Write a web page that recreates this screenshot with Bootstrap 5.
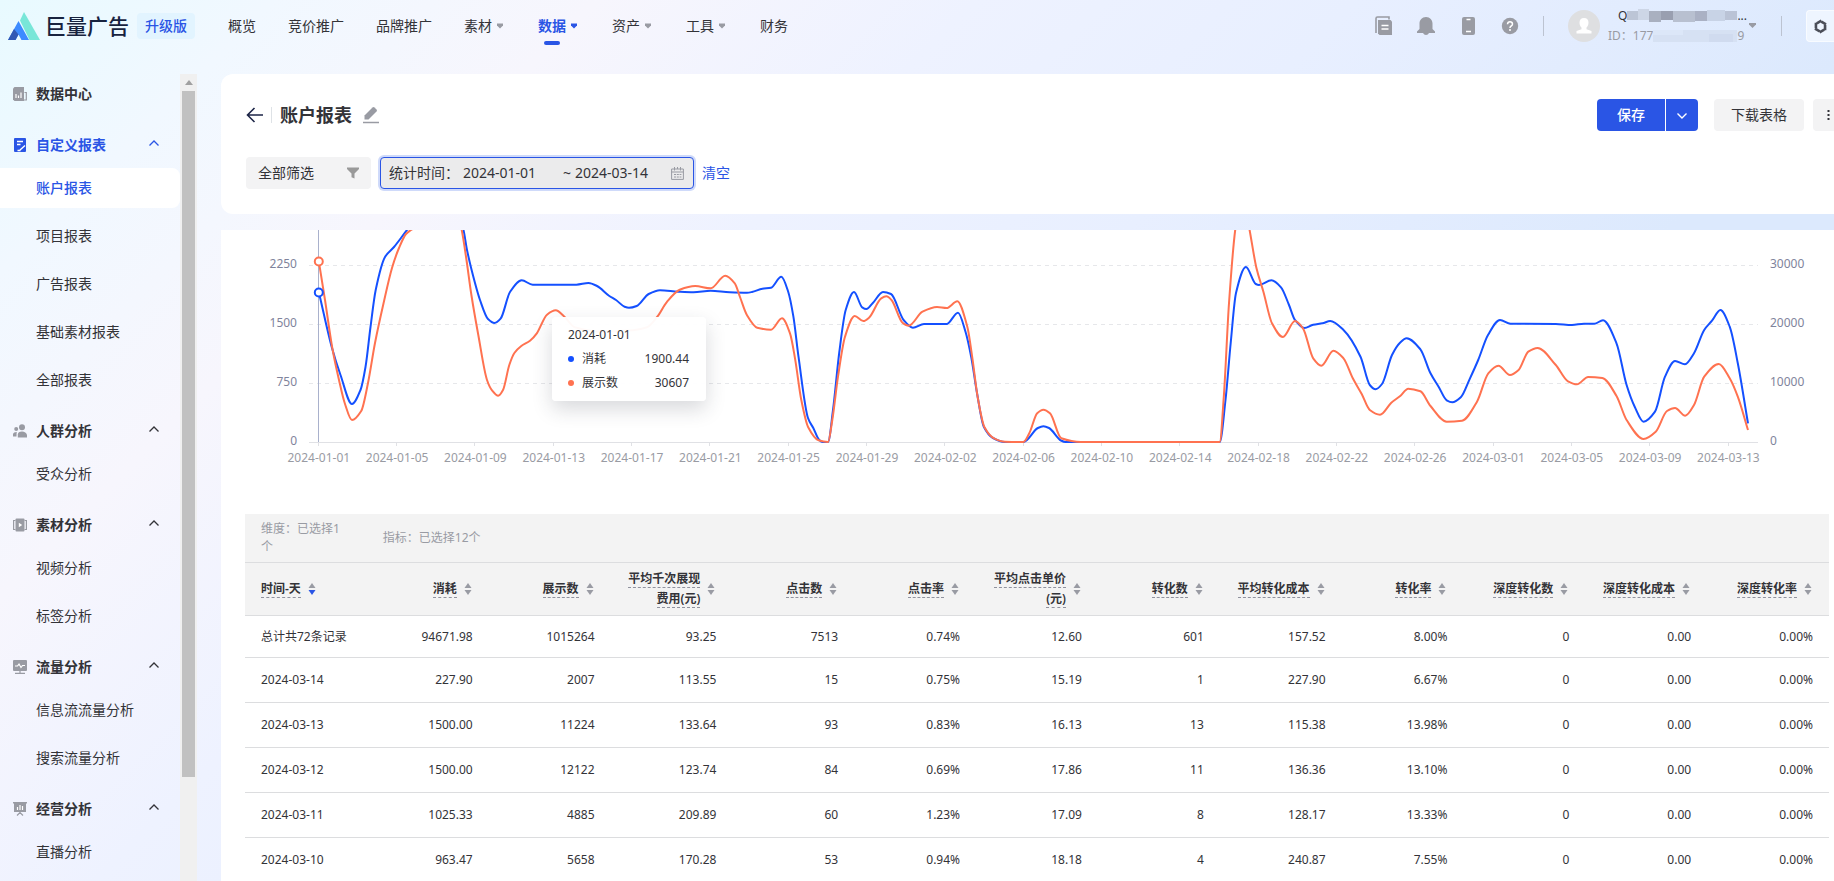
<!DOCTYPE html>
<html lang="zh-CN">
<head>
<meta charset="utf-8">
<meta name="viewport" content="width=device-width, initial-scale=1">
<title>账户报表 - 巨量广告</title>
<link href="https://cdn.jsdelivr.net/npm/bootstrap@5.3.0/dist/css/bootstrap.min.css" rel="stylesheet">
<style>
  :root { --brand: #2a55e5; --ink: #333338; --mute: #999ba3; --line: #dcdddf; }
  body {
    font-family: "Noto Sans", "Noto Sans CJK SC", sans-serif;
    font-size: 14px; line-height: 20px; color: var(--ink);
    background: linear-gradient(135deg, #e8faff 0%, #f1f8ff 10%, #f7f6fd 22%, #eef2ff 36%, #e8efff 50%, #dce9fd 70%, #dce9fd 100%);
  }
  a { color: inherit; text-decoration: none; }
  .topbar { height: 74px; flex: none; }
  .topbar-row { height: 52px; padding-left: 8px; }
  .brand-name { font-size: 21px; line-height: 28px; font-weight: 500; color: #18233f; margin-left: 5px; }
  .edition { background: #e2f4ff; color: var(--brand); padding: 3px 8px; border-radius: 4px; margin-left: 8px; font-weight: 500; }
  .top-menu { gap: 32px; margin-left: 33px; }
  .top-menu a { display: flex; align-items: center; height: 20px; }
  .top-menu svg { width: 14px; height: 8px; fill: #999ba3; }
  .top-menu .current { color: var(--brand); font-weight: 600; }
  .top-menu .current svg { fill: var(--brand); }
  .top-menu .current span { position: relative; }
  .top-menu .current span::after { content: ""; position: absolute; left: 6px; top: 25px; width: 16px; height: 4px; border-radius: 2px; background: var(--brand); }
  .tool-icons { gap: 24px; }
  .icon-btn { background: none; border: 0; padding: 0; display: flex; }
  .v-rule { width: 1px; height: 20px; background: #bcc3d1; }
  .account { font-size: 12px; line-height: 20px; width: 137px; color: var(--mute); white-space: nowrap; }
  .account svg { flex: none; }
  .account-name { color: var(--ink); padding-left: 10px; }
  .settings-box { width: 28px; height: 32px; background: #eef5ff; border: 1px solid #f8fbff; border-right: 0; border-radius: 4px 0 0 4px; display: flex; align-items: center; justify-content: center; }

  .side { width: 180px; flex: none; overflow: hidden; }
  .side-top, .side-group { display: flex; align-items: center; padding: 0 21px 0 13px; font-weight: 600; width: 100%; border: 0; background: none; color: var(--ink); text-align: left; }
  .side-top { height: 40px; margin-bottom: 8px; }
  .side-group { height: 46px; }
  .side-group.open { color: var(--brand); }
  .side-icon { width: 14px; height: 14px; margin-right: 9px; flex: none; }
  .side-group .chev { margin-left: auto; width: 10px; height: 10px; margin-bottom: 4px; }
  .side-link { display: flex; align-items: center; height: 40px; margin-bottom: 8px; padding-left: 36px; border-radius: 0 8px 8px 0; }
  .side-link.active { background: #fff; color: var(--brand); font-weight: 500; }
  .scroll-rail { width: 17px; flex: none; background: #f0f0f0; padding: 0 2px; }
  .scroll-up { height: 17px; display: flex; align-items: center; justify-content: center; }
  .scroll-thumb { height: 85%; background: #c1c1c1; }

  .body-row { min-height: 0; }
  .main-col { margin-left: 24px; overflow: hidden; }
  .head-card { background: #fff; border-radius: 12px 0 0 12px; padding: 25px 0 25px 25px; flex: none; }
  .title-rule { width: 1px; height: 16px; background: #dee2e6; }
  .page-title { font-size: 18px; line-height: 24px; font-weight: 700; margin: 0 10px 0 0; }
  .btn-row .btn { height: 32px; padding: 0; font-size: 14px; line-height: 20px; border: 0; border-radius: 4px; }
  .btn-row .btn-save { width: 68px; background: var(--brand); color: #fff; border-radius: 4px 0 0 4px; font-weight: 500; }
  .btn-row .btn-caret { width: 32px; background: var(--brand); border-radius: 0 4px 4px 0; margin-left: 1px; }
  .btn-row .btn-grey { background: #f3f3f4; color: var(--ink); }
  .btn-row .btn-load { width: 90px; margin-left: 16px; }
  .btn-row .btn-more { width: 21px; margin-left: 9px; border-radius: 4px 0 0 4px; text-align: right; padding-right: 4px; }
  .filter-row { margin-top: 26px; }
  .filter-btn { width: 125px; height: 32px; background: #f3f3f4; border: 0; border-radius: 4px; padding: 0 12px; color: var(--ink); }
  .date-box { width: 314px; height: 32px; background: #ebebec; border: 1px solid var(--brand); border-radius: 4px; box-shadow: 0 0 0 2px #cfdafa; margin-left: 9px; padding: 0 9px 0 8px; }
  .date-box input { width: 88px; border: 0; padding: 0; background: none; color: var(--ink); font-size: 14px; line-height: 20px; outline: 0; }
  .clear-link { color: var(--brand); margin-left: 8px; }

  .report { background: #fff; margin-top: 16px; overflow: hidden; }
  .chart-grid { display: grid; grid-template-columns: 88px minmax(0, 1fr) 76px; position: relative; }
  .axis { padding-top: 4px; font-size: 12px; color: #7f849c; height: 240px; }
  .axis div { height: 59px; display: flex; align-items: center; padding: 0 12px; }
  .axis-left div { justify-content: flex-end; }
  .plot { display: block; width: 100%; height: 217px; }
  .days { display: flex; margin-left: calc(-100% * 3 / 148); font-size: 12px; line-height: 18px; color: var(--mute); padding-top: 2px; white-space: nowrap; }
  .days span { flex: none; display: flex; justify-content: center; }
  .tip { position: absolute; left: 331px; top: 87px; width: 154px; padding: 6px 17px 6px 16px; font-size: 12px; line-height: 24px; background: rgba(255,255,255,.96); border-radius: 4px; box-shadow: 0 8px 20px rgba(40,45,60,.18); }
  .tip i { width: 6px; height: 6px; border-radius: 50%; margin-right: 8px; }
  .dot-cost { background: #1450ff; }
  .dot-show { background: #ff7250; }

  .table-area { margin: 44px 5px 0 24px; }
  .report-table { width: 100%; table-layout: fixed; border-collapse: separate; border-spacing: 0; font-size: 12px; line-height: 18px; }
  .report-table th, .report-table td { border-bottom: 1px solid var(--line); padding: 0 16px; text-align: right; font-weight: 400; height: 45px; }
  .report-table th:first-child, .report-table td:first-child { text-align: left; }
  .report-table thead { background: #f3f3f3; }
  .report-table .picked th { height: 49px; color: var(--mute); text-align: left; }
  .report-table .heads th { height: 53px; font-weight: 600; line-height: 20px; }
  .report-table .sum td { height: 42px; }
  .sort-head { display: inline-flex; align-items: center; gap: 6px; vertical-align: middle; border: 0; background: none; padding: 0; font-weight: 600; color: var(--ink); text-align: right; line-height: 20px; }
  .sort-head span > span { border-bottom: 1px dashed #90929e; }
  .sort-head svg { width: 10px; height: 12px; fill: #999ba3; flex: none; }
  .sort-head .on { fill: var(--brand); }
</style>
</head>
<body class="vh-100 overflow-hidden d-flex flex-column">

<header class="topbar">
  <div class="topbar-row d-flex align-items-center">
    <a href="#" class="d-flex align-items-center">
      <svg width="32" height="28" viewBox="0 0 32 28"><path d="M16 0 32 28H21.500L12 8.500z" fill="#78e6d8"/><path d="M10.500 9 21 28H13.500L10.500 22.500 7.500 28H0z" fill="#3d8bff"/><path d="M0 28 6 17 10.500 22.500 7.500 28z" fill="#3158b4"/></svg>
      <span class="brand-name">巨量广告</span>
    </a>
    <span class="edition">升级版</span>
    <nav class="top-menu d-flex">
      <a href="#">概览</a>
      <a href="#">竞价推广</a>
      <a href="#">品牌推广</a>
      <a href="#"><span>素材</span><svg viewBox="0 0 14 8"><path d="M5 1.500h6v2L8 6.500 5 3.500z"/></svg></a>
      <a href="#" class="current"><span>数据</span><svg viewBox="0 0 14 8"><path d="M5 1.500h6v2L8 6.500 5 3.500z"/></svg></a>
      <a href="#"><span>资产</span><svg viewBox="0 0 14 8"><path d="M5 1.500h6v2L8 6.500 5 3.500z"/></svg></a>
      <a href="#"><span>工具</span><svg viewBox="0 0 14 8"><path d="M5 1.500h6v2L8 6.500 5 3.500z"/></svg></a>
      <a href="#">财务</a>
    </nav>
    <div class="tool-icons d-flex align-items-center ms-auto">
      <button class="icon-btn" aria-label="文档"><svg width="18" height="20" viewBox="0 0 18 20"><path d="M1 17V2.500Q1 1 2.500 1H14v2.500" fill="none" stroke="#999ba3" stroke-width="1.600"/><path d="M3 4h12.500L17 5.500V19H4.500L3 17.500z" fill="#999ba3"/><path d="M6.500 9.500h7M6.500 13h7" stroke="#fff" stroke-width="1.400"/></svg></button>
      <button class="icon-btn" aria-label="通知"><svg width="18" height="20" viewBox="0 0 18 20"><path d="M9 1c4 0 6.500 3 6.500 6.500V13l2.500 2.500V17H0v-1.500L2.500 13V7.500C2.500 4 5 1 9 1z" fill="#999ba3"/><path d="M6 17h6q-1 2-3 2t-3-2z" fill="#999ba3"/></svg></button>
      <button class="icon-btn" aria-label="手机"><svg width="18" height="20" viewBox="0 0 18 20"><rect x="3" y="1" width="13" height="18" rx="2" fill="#999ba3"/><path d="M7.500 3.500h4M7 15.500h5" stroke="#fff" stroke-width="1.500"/></svg></button>
      <button class="icon-btn" aria-label="帮助"><svg width="18" height="20" viewBox="0 0 18 20"><circle cx="9" cy="10" r="8.200" fill="#999ba3"/><path d="M6.500 8.200Q6.700 5.800 9 5.800T11.500 8Q11.500 9.300 10.200 10T9 12" fill="none" stroke="#fff" stroke-width="1.500"/><circle cx="9" cy="14" r="1" fill="#fff"/></svg></button>
      <span class="v-rule"></span>
      <svg width="32" height="32" viewBox="0 0 32 32"><circle cx="16" cy="16" r="16" fill="#dedfe1"/><path d="M16 8c3 0 4.500 2 4.500 4.800 0 2-.9 3.800-2 4.800v1.600l5 1.800v2.500h-15V21l5-1.800v-1.600c-1.100-1-2-2.800-2-4.800C11.500 10 13 8 16 8z" fill="#fff"/></svg>
    </div>
    <div class="account ms-2">
      <div class="account-name d-flex align-items-center">Q<svg width="110" height="14" viewBox="0 0 110 14"><path d="M0 2h11v9H0z" fill="#bcc5d6"/><path d="M11 0h11v11H11z" fill="#cdd6e6"/><path d="M22 2h12v11H22z" fill="#a9b0c0"/><path d="M34 2h12v9H34z" fill="#999fb0"/><path d="M46 2h22v11H46z" fill="#b8c0d0"/><path d="M68 2h12v10H68z" fill="#aab1c4"/><path d="M80 1h18v11H80z" fill="#c8d3e6"/><path d="M98 2h12v9H98z" fill="#bac3d6"/></svg>...</div>
      <div class="d-flex align-items-center">ID：177<svg width="84" height="12" viewBox="0 0 84 12"><path d="M0 0h84v12H0z" fill="#d6e1f3"/><path d="M0 0h30v5H0z" fill="#dce7f8"/><path d="M56 4h24v8H56z" fill="#d0dbef"/></svg>9</div>
    </div>
    <svg width="8" height="6" viewBox="0 0 8 6" class="ms-1"><path d="M0 0h7v1.500L3.500 5 0 1.500z" fill="#999ba3"/></svg>
    <span class="v-rule mx-4"></span>
    <button class="settings-box p-0" aria-label="设置"><svg width="17" height="17" viewBox="0 0 17 17"><defs><path id="blade" d="M9.300 3.700 14 6.400" fill="none" stroke="#4b4e58" stroke-width="2.600"/></defs><use href="#blade"/><use href="#blade" transform="rotate(60 8.500 8.500)"/><use href="#blade" transform="rotate(120 8.500 8.500)"/><use href="#blade" transform="rotate(180 8.500 8.500)"/><use href="#blade" transform="rotate(240 8.500 8.500)"/><use href="#blade" transform="rotate(300 8.500 8.500)"/></svg></button>
  </div>
</header>

<div class="body-row d-flex flex-grow-1">
  <nav class="side">
    <a href="#" class="side-top"><svg class="side-icon" viewBox="0 0 14 14"><path d="M1.500 0H11v14H1.500L0 12.500v-11z" fill="#999ba3"/><path d="M11.500 5.500H13.300V13H11" fill="none" stroke="#999ba3" stroke-width="1.200"/><path d="M3 11V7M5.500 11V8.500M8 11V5.500" stroke="#fff" stroke-width="1.200"/></svg>数据中心</a>

    <button class="side-group open"><svg class="side-icon" viewBox="0 0 14 14"><rect x="1" y="0" width="12" height="14" rx="1" fill="#2a55e5"/><path d="M4 3.500h6M4 6.500h3.500M7 12l5-4.500M4.500 12.500h3" stroke="#fff" stroke-width="1.400"/></svg>自定义报表<svg class="chev" viewBox="0 0 10 10"><path d="M.5 7.500 5 3l4.500 4.500" fill="none" stroke="currentColor" stroke-width="1.300"/></svg></button>
    <a href="#" class="side-link active">账户报表</a>
    <a href="#" class="side-link">项目报表</a>
    <a href="#" class="side-link">广告报表</a>
    <a href="#" class="side-link">基础素材报表</a>
    <a href="#" class="side-link">全部报表</a>

    <button class="side-group"><svg class="side-icon" viewBox="0 0 14 14" fill="#999ba3"><circle cx="9" cy="3.200" r="3"/><path d="M4.800 13.500v-3Q5 7.500 9 7.500t5 3.500v2.500z"/><circle cx="3.200" cy="5" r="2"/><path d="M0 12.500V10q.5-2 3.800-2Q3.500 9.500 3.500 12.500z"/></svg>人群分析<svg class="chev" viewBox="0 0 10 10"><path d="M.5 7.500 5 3l4.500 4.500" fill="none" stroke="currentColor" stroke-width="1.300"/></svg></button>
    <a href="#" class="side-link">受众分析</a>

    <button class="side-group"><svg class="side-icon" viewBox="0 0 14 14"><rect x="2.500" y="0.500" width="9" height="13" rx="1" fill="#999ba3"/><path d="M2.500 2.500H.6v9h1.900M11.500 2.500h1.900v9h-1.900" fill="none" stroke="#999ba3" stroke-width="1.200"/><path d="M5.800 4.800 9.200 7 5.800 9.200z" fill="#fff"/></svg>素材分析<svg class="chev" viewBox="0 0 10 10"><path d="M.5 7.500 5 3l4.500 4.500" fill="none" stroke="currentColor" stroke-width="1.300"/></svg></button>
    <a href="#" class="side-link">视频分析</a>
    <a href="#" class="side-link">标签分析</a>

    <button class="side-group"><svg class="side-icon" viewBox="0 0 14 14"><rect width="14" height="11" rx="1" fill="#999ba3"/><path d="M7 11v2M2 13.400h10" stroke="#999ba3" stroke-width="1.200"/><path d="M2 6h2.500L6 4l2 3.500L9.500 5.500H12" fill="none" stroke="#fff" stroke-width="1.200"/></svg>流量分析<svg class="chev" viewBox="0 0 10 10"><path d="M.5 7.500 5 3l4.500 4.500" fill="none" stroke="currentColor" stroke-width="1.300"/></svg></button>
    <a href="#" class="side-link">信息流流量分析</a>
    <a href="#" class="side-link">搜索流量分析</a>

    <button class="side-group"><svg class="side-icon" viewBox="0 0 14 14"><path d="M0 0h14v1.500h-1V10H1V1.500H0z" fill="#999ba3"/><path d="M7 10v2M4 13.500 7 10.500l3 3" fill="none" stroke="#999ba3" stroke-width="1.200"/><path d="M4.500 8V5M7 8V3M9.500 8V4" stroke="#fff" stroke-width="1.200"/></svg>经营分析<svg class="chev" viewBox="0 0 10 10"><path d="M.5 7.500 5 3l4.500 4.500" fill="none" stroke="currentColor" stroke-width="1.300"/></svg></button>
    <a href="#" class="side-link">直播分析</a>
  </nav>
  <div class="scroll-rail" aria-hidden="true">
    <div class="scroll-up"><svg width="8" height="5" viewBox="0 0 8 5"><path d="M4 0 8 5H0z" fill="#a0a0a0"/></svg></div>
    <div class="scroll-thumb"></div>
  </div>

  <main class="main-col flex-grow-1 d-flex flex-column">
    <section class="head-card">
      <div class="btn-row d-flex align-items-center">
        <button class="icon-btn" aria-label="返回"><svg width="17" height="16" viewBox="0 0 17 16"><path d="M8.500 1 1.500 8l7 7M1.500 8H17" fill="none" stroke="#1d2547" stroke-width="1.600"/></svg></button>
        <span class="title-rule mx-2"></span>
        <h1 class="page-title">账户报表</h1>
        <button class="icon-btn" aria-label="编辑"><svg width="18" height="18" viewBox="0 0 18 18"><path d="M2.500 13.500V9.500L10.500 1.500q1-1 2 0l2 2q1 1 0 2L6.500 13.500z" fill="#999ba3"/><path d="M1 16.500h16" stroke="#999ba3" stroke-width="1.500"/></svg></button>
        <button class="btn btn-save ms-auto">保存</button>
        <button class="btn btn-caret" aria-label="更多保存方式"><svg width="10" height="10" viewBox="0 0 10 10"><path d="M.5 2.500 5 7l4.500-4.500" fill="none" stroke="#fff" stroke-width="1.400"/></svg></button>
        <button class="btn btn-grey btn-load">下载表格</button>
        <button class="btn btn-grey btn-more" aria-label="更多"><svg width="3" height="12" viewBox="0 0 3 12" class="d-block ms-auto"><path d="M.5 1h2v2h-2zM.5 5h2v2h-2zM.5 9h2v2h-2z" fill="#333338"/></svg></button>
      </div>
      <div class="filter-row d-flex align-items-center">
        <button class="filter-btn d-flex align-items-center justify-content-between">全部筛选<svg width="12" height="12" viewBox="0 0 12 12"><path d="M0 .5h12v1.500L7.500 6.500v5l-3-1.200V6.500L0 2z" fill="#999"/></svg></button>
        <div class="date-box d-flex align-items-center">
          <label for="from" class="me-1">统计时间：</label>
          <input id="from" value="2024-01-01">
          <label for="to" class="px-1 ms-2">~</label>
          <input id="to" value="2024-03-14">
          <svg width="13" height="13" viewBox="0 0 13 13" class="ms-auto"><path d="M.6 2h11.800v10.400H.6zM.6 5h11.800M3.500 0v3.500M9.500 0v3.500M6.500 0v2" fill="none" stroke="#999ba3"/><path d="M3 7.500h2M5.800 7.500h2M8.600 7.500h1.800M3 10h2M5.800 10h2M8.600 10h1.800" stroke="#999ba3" stroke-width="1.200"/></svg>
        </div>
        <a href="#" class="clear-link">清空</a>
      </div>
    </section>

    <section class="report flex-grow-1">
      <div class="chart-grid">
        <div class="axis axis-left"><div>2250</div><div>1500</div><div>750</div><div>0</div></div>
        <div>
          <svg class="plot" id="plot" role="img" aria-label="消耗与展示数趋势"></svg>
          <div class="days" id="days"></div>
        </div>
        <div class="axis"><div>30000</div><div>20000</div><div>10000</div><div>0</div></div>
        <div class="tip">
          <div>2024-01-01</div>
          <div class="d-flex align-items-center"><i class="dot-cost"></i>消耗<span class="ms-auto">1900.44</span></div>
          <div class="d-flex align-items-center"><i class="dot-show"></i>展示数<span class="ms-auto">30607</span></div>
        </div>
      </div>

      <div class="table-area">
        <table class="report-table">
          <thead>
            <tr class="picked"><th>维度：已选择1个</th><th colspan="12">指标：已选择12个</th></tr>
            <tr class="heads" id="heads"></tr>
          </thead>
          <tbody>
            <tr class="sum"><td>总计共72条记录</td><td>94671.98</td><td>1015264</td><td>93.25</td><td>7513</td><td>0.74%</td><td>12.60</td><td>601</td><td>157.52</td><td>8.00%</td><td>0</td><td>0.00</td><td>0.00%</td></tr>
            <tr><td>2024-03-14</td><td>227.90</td><td>2007</td><td>113.55</td><td>15</td><td>0.75%</td><td>15.19</td><td>1</td><td>227.90</td><td>6.67%</td><td>0</td><td>0.00</td><td>0.00%</td></tr>
            <tr><td>2024-03-13</td><td>1500.00</td><td>11224</td><td>133.64</td><td>93</td><td>0.83%</td><td>16.13</td><td>13</td><td>115.38</td><td>13.98%</td><td>0</td><td>0.00</td><td>0.00%</td></tr>
            <tr><td>2024-03-12</td><td>1500.00</td><td>12122</td><td>123.74</td><td>84</td><td>0.69%</td><td>17.86</td><td>11</td><td>136.36</td><td>13.10%</td><td>0</td><td>0.00</td><td>0.00%</td></tr>
            <tr><td>2024-03-11</td><td>1025.33</td><td>4885</td><td>209.89</td><td>60</td><td>1.23%</td><td>17.09</td><td>8</td><td>128.17</td><td>13.33%</td><td>0</td><td>0.00</td><td>0.00%</td></tr>
            <tr><td>2024-03-10</td><td>963.47</td><td>5658</td><td>170.28</td><td>53</td><td>0.94%</td><td>18.18</td><td>4</td><td>240.87</td><td>7.55%</td><td>0</td><td>0.00</td><td>0.00%</td></tr>
          </tbody>
        </table>
      </div>
    </section>
  </main>
</div>

<script src="https://cdn.jsdelivr.net/npm/bootstrap@5.3.0/dist/js/bootstrap.bundle.min.js"></script>
<script>
  // Table headings with their sort arrows; the first column is sorted descending.
  const heads = ['时间-天', '消耗', '展示数', '平均千次展现费用(元)', '点击数', '点击率', '平均点击单价(元)', '转化数', '平均转化成本', '转化率', '深度转化数', '深度转化成本', '深度转化率'];
  document.getElementById('heads').innerHTML = heads.map((h, i) =>
    `<th><button class="sort-head"><span><span>${h}</span></span><svg viewBox="0 0 10 12"><path d="M5 0 8.500 5h-7z"/><path class="${i ? '' : 'on'}" d="M1.500 7h7L5 12z"/></svg></button></th>`).join('');

  // Every fourth day gets a label and a tick.
  const DAYS = 74, BASE = 1449;
  const labels = [];
  for (let d = 0; d < DAYS; d += 4) labels.push(new Date(Date.UTC(2024, 0, 1 + d)).toISOString().slice(0, 10));

  // Curve samples: x on a 1449-wide base, y down from the top of the visible area.
  const cost = '9.8,62 23,118 31.5,145 43,174 51.5,160 56.5,137 61.5,97 66.7,60 76,27 85,17 98,0 106,-10 125,-40 145,-30 154.5,0 158,20 166,53 171,70 179,89 185.5,93 191.6,88.7 201,62 212.7,50.3 223.7,54.7 267.4,54.7 279.5,53 288,56 300,65.7 307,70 315.6,76.7 320,77.8 327.7,76 339.7,64 351,60.3 369,61.7 384.5,62.3 401.7,60.7 420.6,62.3 438,62.7 443,62 453.4,58.7 462,57.7 472.3,46.7 479.2,61.7 484.4,86.7 489.5,126.7 499,188 504.3,198 510.2,210 513.6,212 519,212 524,180 530.2,123 536.7,80 545,62 553.2,77.3 557.4,79 563.6,73.3 574,62 582,64 594.6,90 603.9,97.7 615,94 637.6,94 649,82.7 656.5,101.7 662.4,128 668,163 674.8,196.7 684,208 695.5,212 714.4,212 728.9,198 734.4,196.3 740,198 752,210.5 756.4,212 910.7,212 916.5,170 921.7,113 927,63 936.9,37 946.8,54 950,55 962.5,50.3 972,57.3 980,75 986,90 995.3,98 1004.2,94.7 1013.5,93.3 1021.2,91 1034.5,100 1051.5,126.7 1060.8,155 1066.5,159.3 1073,154 1083,125 1091,112.7 1097.6,108.3 1111.4,119.3 1121.5,143.3 1129.6,156.7 1137.7,170.3 1143.3,172.3 1151.8,167.3 1161,148.3 1169.2,130 1179,105 1191,90 1201.5,93.7 1214.5,93.7 1246.8,94 1263,95 1275,93.7 1285.3,93.7 1294,90.3 1307.5,113.3 1317.6,155 1325.7,176.7 1334.6,191.7 1346,181.7 1356,146.7 1366,131 1376,134.3 1385,123.3 1395.2,100 1403,90.7 1411.4,80 1420.7,96.7 1428.8,133.3 1439,193.3';
  const shows = '9.8,31.3 16,70 23.3,118 30,150 35.7,173 43,190 52.2,181 59,153 66,113 74.6,73 83,38 90,18 97,4 102,0 115,-8 135,-30 147,-20 152.7,0 157.2,28 162.4,65 169.3,105 178,150 183,160.3 189.2,165.7 194,160 200.3,135 205.4,123 212.3,116 221,110.7 227.8,103.3 238,84.7 246.7,80.3 255.4,86.7 265.7,97.3 290,101.5 324,100.3 338,97.3 348.3,86.7 357.6,72.3 370.7,59.7 386.2,56 401.7,58.3 416.2,45.7 425.8,53.3 431,67 437.9,85 448.2,97.7 462,99.7 473,88.3 481,103.3 486,128.3 492.3,170 499.2,197.3 509.5,210.3 519,212 523.3,190 529,146.7 536,106.7 545.7,86 554.3,91 560,87.7 572.2,68.3 577.4,66.3 582.5,70 593.5,92.7 599.7,95.7 613.5,81.7 628,77 637.6,78 648.3,71.3 658.3,96.7 663.4,128.3 668.6,166.7 675.5,197.3 685,208.3 696,211.7 714.4,212 720.3,203.3 728.2,183.3 734.4,179.7 741,183.3 752.3,208.3 772,212 910.7,212 914.8,166.7 920,73.3 926.2,0 933,-40 940.6,0 947.5,38.3 954.4,61.7 963,93.3 973.9,107 986,91 994,98.3 1004.2,128.3 1012.3,135.7 1024.4,120.7 1034.5,128.3 1043.8,148.3 1052.7,164 1060.8,180 1071,184.7 1082.3,172.7 1091.2,166 1099.2,158.7 1111.4,161.3 1121.5,176 1137.7,191.7 1153,190.7 1168,171.7 1179.3,143.3 1189.4,135.7 1201,145 1209.6,140 1219.3,121.7 1228.6,118 1246.8,135 1259,151.3 1267.9,154.3 1279.2,147 1293.3,148 1307.5,166 1317.6,190 1334.6,209 1346.7,201.7 1358,181 1366,178 1376.2,185.7 1385,175 1395.2,146.7 1409.8,134 1420.7,148.3 1428.8,166.7 1439,200';

  // Monotone cubic curve through the samples.
  function curve(text, k) {
    const p = text.split(' ').map(s => s.split(',').map(Number)).map(([x, y]) => [x * k, y]);
    const n = p.length, s = [], m = [];
    for (let i = 0; i < n - 1; i++) s.push((p[i + 1][1] - p[i][1]) / (p[i + 1][0] - p[i][0]));
    for (let i = 0; i < n; i++) {
      if (i === 0) m.push(s[0]);
      else if (i === n - 1) m.push(s[n - 2]);
      else m.push(s[i - 1] * s[i] <= 0 ? 0 : 2 * s[i - 1] * s[i] / (s[i - 1] + s[i]));
    }
    let d = `M${p[0]}`;
    for (let i = 0; i < n - 1; i++) {
      const h = (p[i + 1][0] - p[i][0]) / 3;
      d += `C${p[i][0] + h},${p[i][1] + m[i] * h} ${p[i + 1][0] - h},${p[i + 1][1] - m[i + 1] * h} ${p[i + 1]}`;
    }
    return d;
  }

  function draw() {
    const svg = document.getElementById('plot'), w = svg.clientWidth, k = w / BASE, day = w / DAYS;
    let out = '';
    for (const y of [35.5, 94.5, 153.5]) out += `<path d="M0 ${y}H${w}" stroke="#e6e7ea" stroke-dasharray="4 4"/>`;
    out += `<path d="M0 212.5H${w}" stroke="#e0e1e5"/>`;
    labels.forEach((_, i) => { const x = Math.round((i * 4 + .5) * day) - .5; out += `<path d="M${x} 212V216" stroke="#e0e1e5"/>`; });
    const x0 = Math.round(day / 2) - .5;
    out += `<path d="M${x0} 0V212" stroke="#a9b1cc"/>`;
    out += `<path d="${curve(cost, k)}" fill="none" stroke="#1450ff" stroke-width="2"/>`;
    out += `<path d="${curve(shows, k)}" fill="none" stroke="#ff7250" stroke-width="2"/>`;
    out += `<circle cx="${day / 2}" cy="62.500" r="4" fill="#fff" stroke="#1450ff" stroke-width="2"/><circle cx="${day / 2}" cy="31.500" r="4" fill="#fff" stroke="#ff7250" stroke-width="2"/>`;
    svg.innerHTML = out;
    document.getElementById('days').innerHTML = labels.map(l => `<span style="width:${day * 4}px">${l}</span>`).join('');
  }
  draw();
  addEventListener('resize', draw);
</script>
</body>
</html>
